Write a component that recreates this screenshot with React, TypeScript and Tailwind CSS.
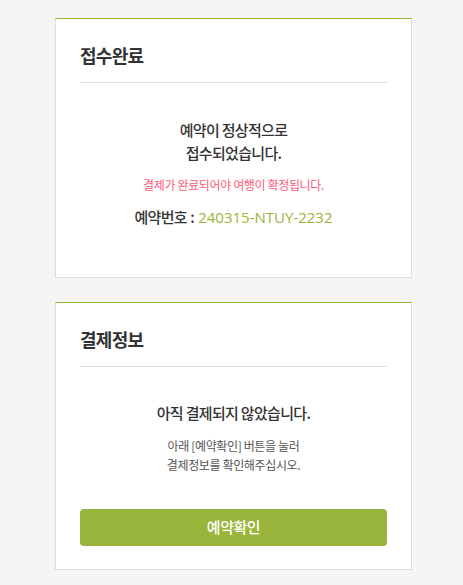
const font = {
  fontFamily: '"Noto Sans CJK KR", "Noto Sans", sans-serif',
};

function CardHeader({ title }: { title: string }) {
  return (
    <div className="mx-6 border-b border-[#dddddd] pt-[23px] pb-[14px]">
      <h2 className="text-[18px] leading-[26px] font-bold text-[#333333] tracking-[-0.04em]">
        {title}
      </h2>
    </div>
  );
}

export default function App() {
  return (
    <div className="min-h-[585px] bg-[#f5f5f5] pt-[18px] pb-4" style={font}>
      <div className="ml-[55px] w-[357px]">
        {/* 접수완료 */}
        <section className="bg-white border border-[#dddddd] border-t-[#8fb82e]">
          <CardHeader title="접수완료" />
          <div className="px-6 pt-[35px] pb-[49px] text-center">
            <p className="text-[15px] leading-[23px] font-medium text-[#333333] tracking-[-0.045em]">
              예약이 정상적으로
              <br />
              접수되었습니다.
            </p>
            <p className="mt-3 text-[12px] leading-[18px] text-[#ff5a78] tracking-[-0.03em]">
              결제가 완료되어야 여행이 확정됩니다.
            </p>
            <p className="mt-3 text-[15px] leading-[22px] font-medium text-[#333333]">
              <span className="tracking-[-0.045em]">예약번호</span>
              <span> : </span>
              <span
                className="text-[#9ab53b] font-medium"
                style={{ fontFamily: '"Open Sans", sans-serif' }}
              >
                240315-NTUY-2232
              </span>
            </p>
          </div>
        </section>

        {/* 결제정보 */}
        <section className="mt-6 bg-white border border-[#dddddd] border-t-[#8fb82e]">
          <CardHeader title="결제정보" />
          <div className="px-6 pt-[35px] pb-[23px] text-center">
            <p className="text-[15px] leading-[22px] font-medium text-[#333333] tracking-[-0.045em]">
              아직 결제되지 않았습니다.
            </p>
            <p className="mt-3 text-[12px] leading-[19px] text-[#555555] tracking-[-0.03em]">
              아래 [예약확인] 버튼을 눌러
              <br />
              결제정보를 확인해주십시오.
            </p>
            <button
              type="button"
              className="mt-[35px] w-full h-[37px] rounded bg-[#9ab53b] text-white text-[15px] font-medium tracking-[-0.03em]"
            >
              예약확인
            </button>
          </div>
        </section>
      </div>
    </div>
  );
}
